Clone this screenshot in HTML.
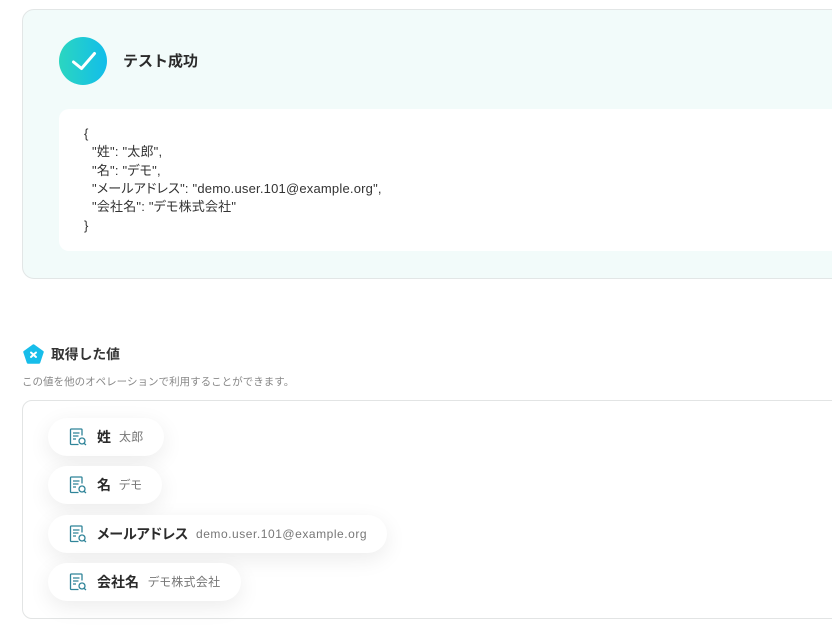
<!DOCTYPE html>
<html lang="ja"><head><meta charset="utf-8"><style>
html,body{margin:0;padding:0;background:#fff}
body{width:832px;height:637px;position:relative;overflow:hidden;font-family:"Liberation Sans","Noto Sans CJK JP",sans-serif;color:#2b2b2b;font-feature-settings:"palt"}
.a{position:absolute;white-space:nowrap}
.card{left:22px;top:9px;width:900px;height:268px;background:#f2fbfa;border:1px solid #e2e6e6;border-radius:12px}
.circle{left:59px;top:37px;width:48px;height:48px;border-radius:50%;background:linear-gradient(90deg,#2bd6c0,#12bdea)}
.code{left:59px;top:109px;width:860px;height:142px;background:#fff;border-radius:10px}
.ln{left:84px;font-size:13px;line-height:18px;color:#333;letter-spacing:.2px}
.box{left:22px;top:400px;width:900px;height:217px;border:1px solid #e2e4e4;border-radius:10px;background:#fff}
.pill{left:48px;height:38px;background:#fff;border-radius:19px;box-shadow:0 6px 22px rgba(0,0,0,.08)}
.ic{position:absolute;left:21px;top:10px}
.k{position:absolute;left:49px;top:0;line-height:38px;font-size:14px;font-weight:700;color:#2b2b2b}
.v{position:absolute;top:0;line-height:38px;font-size:12px;color:#777;letter-spacing:.3px}
</style></head><body>
<div class="a card"></div>
<div class="a circle"></div>
<svg class="a" style="left:59px;top:37px" width="48" height="48" viewBox="0 0 48 48"><path d="M14.500 25L22.500 31.500L35.500 16.500" fill="none" stroke="#fff" stroke-width="3" stroke-linecap="round" stroke-linejoin="round"/></svg>
<div class="a" style="left:123px;top:52px;font-size:15px;line-height:20px;font-weight:700;color:#2b2b2b;font-feature-settings:normal">テスト成功</div>
<div class="a code"></div>
<div class="a ln" style="top:125px">{</div>
<div class="a ln" style="top:143px;left:92px">"姓": "太郎",</div>
<div class="a ln" style="top:162px;left:92px">"名": "デモ",</div>
<div class="a ln" style="top:180px;left:92px">"メールアドレス": "demo.user.101@example.org",</div>
<div class="a ln" style="top:198px;left:92px">"会社名": "デモ株式会社"</div>
<div class="a ln" style="top:217px">}</div>
<svg class="a" style="left:23px;top:344px" width="21" height="21" viewBox="0 0 21 21"><path d="M10.500 1.500L19.500 8L16 18.500H5L1.500 8Z" fill="#17bdea" stroke="#17bdea" stroke-width="2.500" stroke-linejoin="round"/><path d="M8 8.500L13 13M13 8.500L8 13" stroke="#fff" stroke-width="2" stroke-linecap="round"/></svg>
<div class="a" style="left:51px;top:345px;font-size:13.800px;line-height:20px;font-weight:700;color:#333;font-feature-settings:normal">取得した値</div>
<div class="a" style="left:22px;top:374px;font-size:10.500px;letter-spacing:.02px;line-height:16px;color:#888;font-feature-settings:normal">この値を他のオペレーションで利用することができます。</div>
<div class="a box"></div>

<div class="a pill" style="top:418px;width:116px"><svg class="ic" width="18" height="18" viewBox="0 0 18 18"><path d="M9.500 16.500H2.300Q1.500 16.500 1.500 15.700V1.800Q1.500 1 2.300 1H12.200Q13 1 13 1.800V7.500M4 5H10.500M4 8H9.500M4 11H7" fill="none" stroke="#2f8499" stroke-width="1.300"/><circle cx="13" cy="13" r="3" fill="none" stroke="#2f8499" stroke-width="1.300"/><path d="M15 15.300L17 17" stroke="#2f8499" stroke-width="1.300"/></svg><span class="k">姓</span><span class="v" style="left:71px">太郎</span></div>
<div class="a pill" style="top:466px;width:114px"><svg class="ic" width="18" height="18" viewBox="0 0 18 18"><path d="M9.500 16.500H2.300Q1.500 16.500 1.500 15.700V1.800Q1.500 1 2.300 1H12.200Q13 1 13 1.800V7.500M4 5H10.500M4 8H9.500M4 11H7" fill="none" stroke="#2f8499" stroke-width="1.300"/><circle cx="13" cy="13" r="3" fill="none" stroke="#2f8499" stroke-width="1.300"/><path d="M15 15.300L17 17" stroke="#2f8499" stroke-width="1.300"/></svg><span class="k">名</span><span class="v" style="left:71px">デモ</span></div>
<div class="a pill" style="top:515px;width:339px"><svg class="ic" width="18" height="18" viewBox="0 0 18 18"><path d="M9.500 16.500H2.300Q1.500 16.500 1.500 15.700V1.800Q1.500 1 2.300 1H12.200Q13 1 13 1.800V7.500M4 5H10.500M4 8H9.500M4 11H7" fill="none" stroke="#2f8499" stroke-width="1.300"/><circle cx="13" cy="13" r="3" fill="none" stroke="#2f8499" stroke-width="1.300"/><path d="M15 15.300L17 17" stroke="#2f8499" stroke-width="1.300"/></svg><span class="k">メールアドレス</span><span class="v" style="left:148px;letter-spacing:.54px">demo.user.101@example.org</span></div>
<div class="a pill" style="top:563px;width:193px"><svg class="ic" width="18" height="18" viewBox="0 0 18 18"><path d="M9.500 16.500H2.300Q1.500 16.500 1.500 15.700V1.800Q1.500 1 2.300 1H12.200Q13 1 13 1.800V7.500M4 5H10.500M4 8H9.500M4 11H7" fill="none" stroke="#2f8499" stroke-width="1.300"/><circle cx="13" cy="13" r="3" fill="none" stroke="#2f8499" stroke-width="1.300"/><path d="M15 15.300L17 17" stroke="#2f8499" stroke-width="1.300"/></svg><span class="k">会社名</span><span class="v" style="left:100px">デモ株式会社</span></div>
</body></html>
